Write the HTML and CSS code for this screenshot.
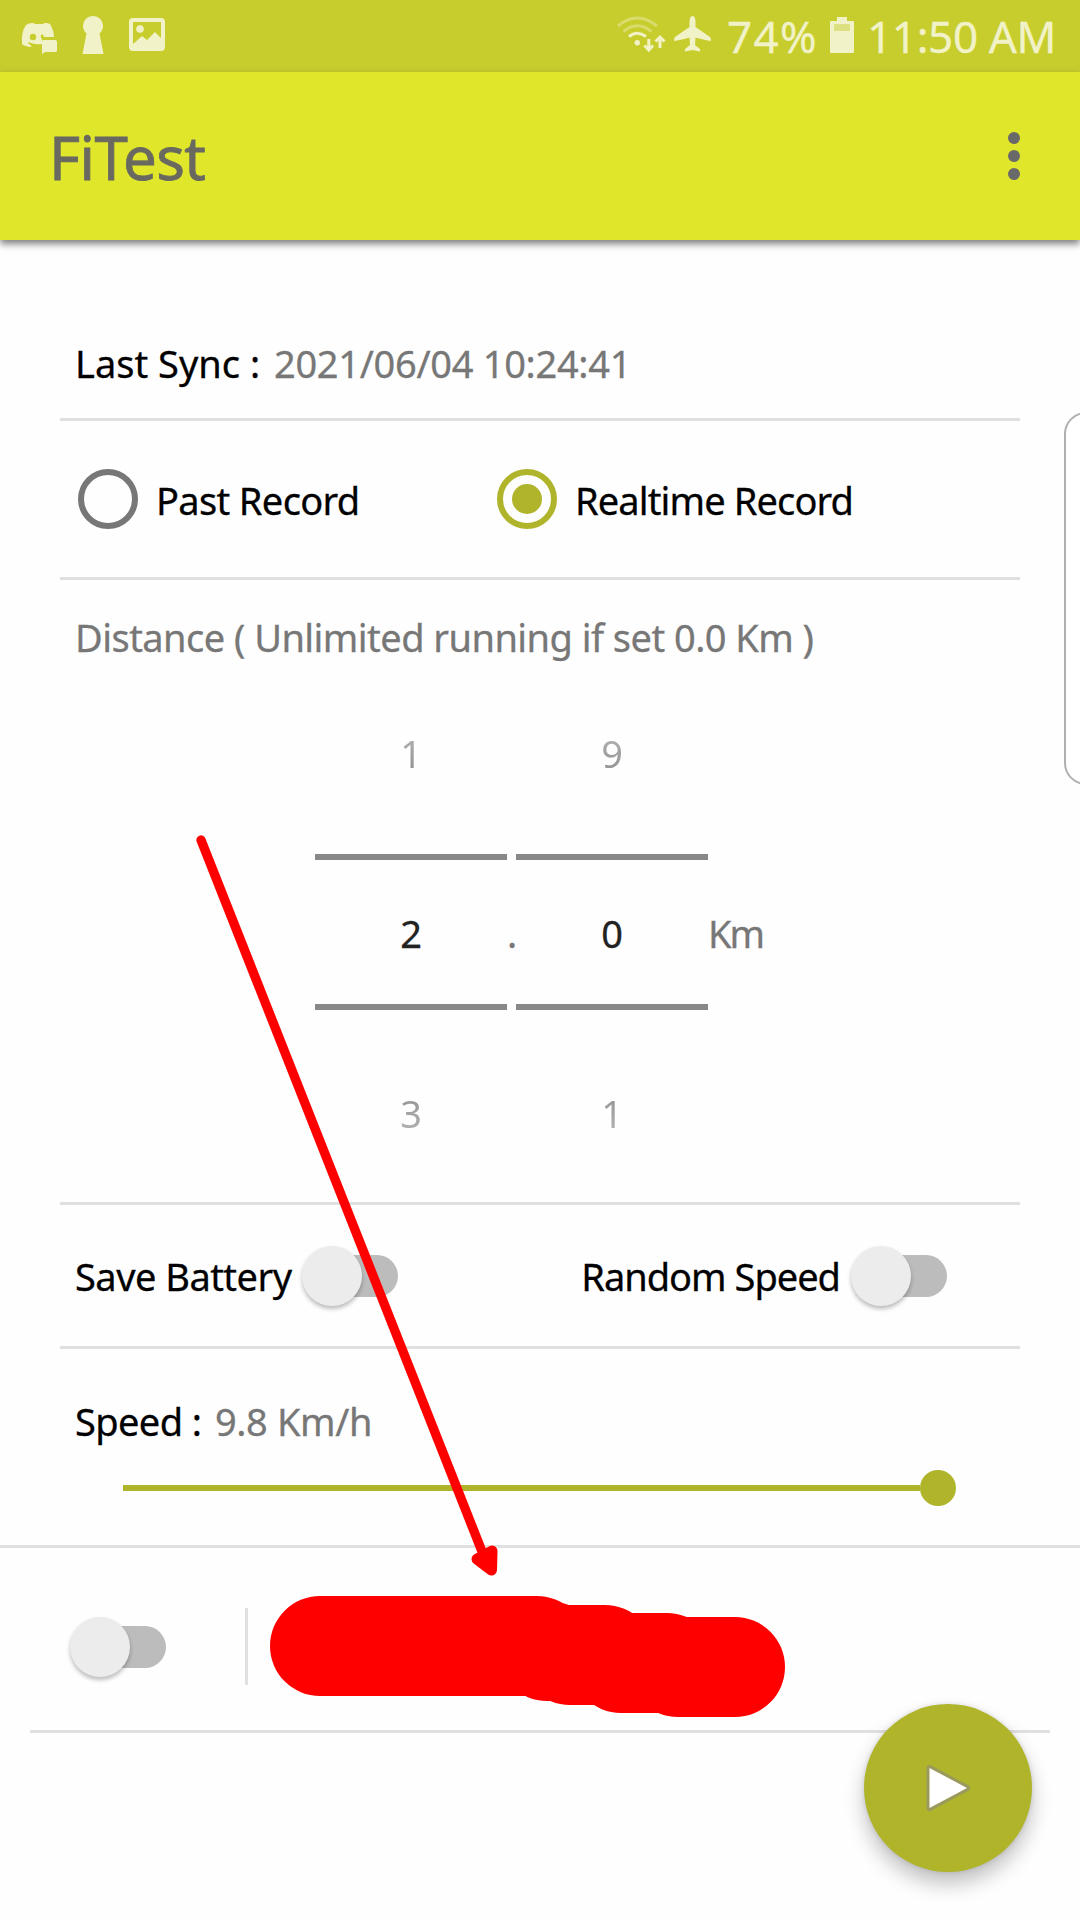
FILE: index.html
```html
<!DOCTYPE html>
<html lang="en">
<head>
<meta charset="utf-8">
<title>FiTest</title>
<link rel="stylesheet" href="styles.css">
</head>
<body>
<div class="screen">
  <header class="status">
    <svg class="notifications" width="180" height="72" viewBox="0 0 180 72" fill="#f2f2c8">
      <path d="M28 24Q33 22 35 24H43Q45 22 50 24Q54 31 54 37H44Q43 33 41 35Q40 37 42 40V44Q36 45 31 43L28 42Q28 44 32 46L30 47Q24 46 22 44Q21 32 26 25Z"/>
      <circle cx="33" cy="37" r="3.2" fill="#c8cd2e"/>
      <path d="M43 40H55Q57 40 57 42V51Q57 52 55 52H45L42 54V41Z"/>
      <path d="M93 16A10 10 0 0 1 99.500 33.500L103.500 54H82.500L86.500 33.500A10 10 0 0 1 93 16Z"/>
      <path fill-rule="evenodd" d="M133 18H161Q165 18 165 22V47Q165 51 161 51H133Q129 51 129 47V22Q129 18 133 18ZM133 22V44L142 36L147 40L155 32L161 38V22Z"/>
      <circle cx="140" cy="29" r="3.800"/>
    </svg>
    <div class="system">
      <svg class="wifi" width="112" height="72" viewBox="610 0 112 72" fill="none" stroke="#f2f2c8" stroke-width="3">
        <path d="M618 26Q637 10 657 26" opacity=".4"/>
        <path d="M623.500 31.500Q637 20 651.500 31.500" opacity=".4"/>
        <path d="M629 36.500Q637 30 646 36.500"/>
        <circle cx="637.300" cy="42.700" r="2.700" fill="#f2f2c8" stroke="none"/>
        <path d="M648.800 39V50M644.500 45.500L648.800 50L653 45.500M660 48V37M655.500 41.500L660 37L664.500 41.500"/>
        <path fill="#f2f2c8" stroke="none" d="M692.500 16Q695.500 16 695.500 22V27L710 37Q711 38 711 41Q705 40 695.500 37.500L695 45L700 49V51.500L692.500 50L685 51.500V49L690 45L689.500 37.500Q680 40 674 41Q674 38 675 37L689.500 27V22Q689.500 16 692.500 16Z"/>
      </svg>
      <span class="percent">74%</span>
      <svg class="battery" width="24" height="72" viewBox="0 0 24 72" fill="#f2f2c8">
        <path d="M7 17H17V21H23Q24 21 24 22V52Q24 53 23 53H1Q0 53 0 52V22Q0 21 1 21H7Z"/>
        <path d="M4 24H20V31H4Z" fill="#dde081"/>
      </svg>
      <span class="clock">11:50 AM</span>
    </div>
  </header>
  <div class="appbar">
    <h1 class="title">FiTest</h1>
    <div class="menu"><i></i><i></i><i></i></div>
  </div>
  <main>
    <section class="row sync">
      <span class="lastsync">Last Sync :</span><span class="date muted">2021/06/04 10:24:41</span>
    </section>
    <section class="row modes">
      <label class="mode"><span class="radio"></span><span class="past">Past Record</span></label>
      <label class="mode"><span class="radio on"></span><span class="realtime">Realtime Record</span></label>
    </section>
    <section class="row distance">
      <p class="muted hint">Distance ( Unlimited running if set 0.0 Km )</p>
      <div class="picker">
        <div class="wheel"><span class="prev">1</span><span class="current">2</span><span class="next">3</span></div>
        <span class="point muted">.</span>
        <div class="wheel"><span class="prev">9</span><span class="current">0</span><span class="next">1</span></div>
        <span class="unit muted">Km</span>
      </div>
    </section>
    <section class="row switches">
      <label class="option"><span class="save">Save Battery</span><span class="switch"></span></label>
      <label class="option"><span class="random">Random Speed</span><span class="switch"></span></label>
    </section>
    <section class="speed">
      <p><span class="speedlabel">Speed :</span><span class="value muted">9.8 Km/h</span></p>
      <div class="slider"><i></i></div>
    </section>
    <section class="account">
      <span class="switch"></span>
      <span class="bar"></span>
    </section>
  </main>
  <div class="edge"></div>
  <button class="fab" aria-label="Start">
    <svg width="48" height="56" viewBox="0 0 48 56"><path d="M5.500 8L43 28L5.500 48Z" fill="#9a9a5c" stroke="#9a9a5c" stroke-width="6" stroke-linejoin="round"/><path d="M5.500 8L43 28L5.500 48Z" fill="#fff"/></svg>
  </button>
  <svg class="marks" width="1080" height="1920" viewBox="0 0 1080 1920" fill="none" stroke="red" stroke-linecap="round" stroke-linejoin="round">
    <path d="M201 840L483 1554" stroke-width="9.300"/>
    <path d="M477 1559L492 1551L491.500 1570Z" stroke-width="11" fill="red"/>
    <path d="M320 1646H537M547 1651H549M570 1655H605M621 1663H667M678 1667H735" stroke-width="100"/>
  </svg>
</div>
</body>
</html>
```
FILE: styles.css
```css
* { box-sizing: border-box; margin: 0; padding: 0; }
body { background: #fefefe; font: 38px/52px "Noto Sans", sans-serif; color: #000; -webkit-text-stroke: .3px; }
.screen { position: relative; width: 1080px; height: 1920px; overflow: hidden; display: flex; flex-direction: column; }
span, h1, p { white-space: nowrap; }
svg { display: block; flex: none; }
.muted { color: #777; }

.status { height: 72px; background: #c8cd2e; display: flex; justify-content: space-between; color: #f2f2c8; font-size: 44px; line-height: 72px; }
.system { display: flex; }
.percent { width: 90px; margin-left: 5px; letter-spacing: 1.3px; }
.battery { margin-left: 13px; }
.clock { width: 213px; margin-left: 13px; letter-spacing: -.35px; }
.appbar { height: 168px; background: #e0e62a; box-shadow: 0 4px 7px rgba(0,0,0,.5); display: flex; justify-content: space-between; align-items: center; padding: 0 60px 0 48px; }
.title { font-size: 60px; font-weight: 400; color: #696960; line-height: 82px; letter-spacing: -.6px; padding: 2px 0 0 1px; -webkit-text-stroke: .8px; }
.menu { display: flex; flex-direction: column; gap: 6px; margin-top: -1px; }
.menu i { width: 12px; height: 12px; border-radius: 50%; background: #696969; }

.row { margin: 0 60px; border-bottom: 3px solid #e0e0e0; }
.sync { height: 181px; padding: 97px 14px 0 15px; display: flex; }
.lastsync { width: 199px; }
.date { letter-spacing: -.3px; }
.modes { height: 159px; padding-left: 18px; display: flex; align-items: center; }
.mode { display: flex; align-items: center; gap: 18px; width: 419px; height: 60px; }
.past, .realtime { padding-top: 1px; }
.past { letter-spacing: -.65px; }
.realtime { letter-spacing: -.87px; }
.radio { width: 60px; height: 60px; border: 6px solid #777; border-radius: 50%; display: grid; place-items: center; flex: none; }
.radio.on { border-color: #afb42b; }
.radio.on::after { content: ""; width: 30px; height: 30px; border-radius: 50%; background: #afb42b; }
.distance { height: 625px; padding-top: 31px; }
.hint { padding-left: 15px; letter-spacing: -.54px; }
.picker { margin-top: 64px; padding-left: 255px; display: flex; }
.wheel { width: 192px; text-align: center; color: #222; display: flex; flex-direction: column; }
.wheel span { height: 52px; }
.wheel .current { height: 156px; margin: 75px 0; padding-top: 47px; border: solid #888; border-width: 6px 0; }
.wheel .prev, .wheel .next { color: transparent; -webkit-text-stroke: 0; -webkit-background-clip: text; background-clip: text; }
.prev { background-image: linear-gradient(#b8b8b8, #8c8c8c); }
.wheel .next { height: 54px; padding-top: 2px; background-image: linear-gradient(#8c8c8c, #b8b8b8); }
.point { width: 9px; padding-top: 180px; }
.unit { padding-top: 180px; letter-spacing: -2px; }
.switches { height: 144px; padding: 0 73px 0 15px; display: flex; justify-content: space-between; align-items: center; }
.option { display: flex; align-items: center; }
.save { letter-spacing: -.52px; }
.random { letter-spacing: -1px; }
.switch { position: relative; width: 96px; height: 60px; margin-left: 10px; display: flex; align-items: center; flex: none; }
.random + .switch { margin-left: 11px; }
.switch::before { content: ""; flex: 1; height: 42px; margin-left: 12px; border-radius: 21px; background: #bcbcbc; }
.switch::after { content: ""; position: absolute; left: 0; top: 0; width: 60px; height: 60px; border-radius: 50%; background: #ececec; box-shadow: 0 3px 4px rgba(0,0,0,.26); }
.speed { height: 199px; border-bottom: 3px solid #e0e0e0; padding: 46px 74px 0 75px; }
.speed p { display: flex; }
.speedlabel { width: 140px; letter-spacing: -.6px; }
.value { letter-spacing: -.4px; }
.slider { height: 36px; margin: 23px 50px 0 48px; display: flex; align-items: center; }
.slider::before { content: ""; flex: 1; height: 6px; background: #afb42b; }
.slider i { width: 36px; height: 36px; border-radius: 50%; background: #afb42b; }
.account { height: 185px; margin: 0 30px; border-bottom: 3px solid #e0e0e0; display: flex; align-items: center; padding: 15px 0 0 30px; }
.account .bar { width: 3px; height: 77px; margin-left: 79px; background: #e0e0e0; }

.edge { position: absolute; left: 1064px; top: 412px; width: 44px; height: 373px; border: 2px solid #b0b0b0; border-radius: 22px; background: #fff; }
.fab { position: absolute; left: 864px; top: 1704px; width: 168px; height: 168px; border: 0; border-radius: 50%; background: #afb42b; box-shadow: 0 12px 20px rgba(0,0,0,.24), 0 0 5px rgba(0,0,0,.12); display: flex; align-items: center; padding-left: 60px; }
.marks { position: absolute; left: 0; top: 0; pointer-events: none; }
```
